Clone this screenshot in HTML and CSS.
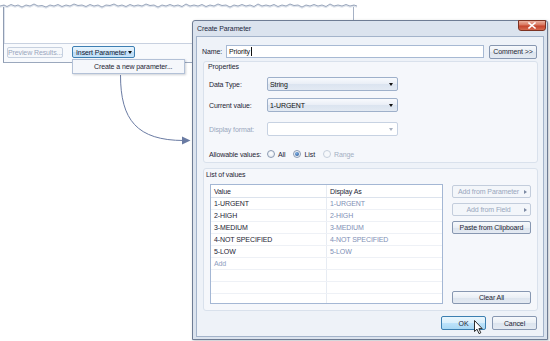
FILE: index.html
```html
<!DOCTYPE html>
<html>
<head>
<meta charset="utf-8">
<link rel="stylesheet" href="styles.css">
</head>
<body>
<div class="canvas">
  <div class="bgwin">
    <div class="bgwin-body"></div>
    <div class="bgwin-toolbar">
      <div class="tb-btn tb-disabled">Preview Results...</div>
      <div class="tb-btn tb-hot"><span>Insert Parameter</span><span class="caret"></span></div>
    </div>
  </div>
  <svg class="torn" viewBox="0 0 360 12" width="360" height="12">
    <path class="torn-shadow" d="M0 7 L4 6 L7 7.5 L11 5.5 L15 7 L18 6 L22 8 L26 6 L30 7 L34 5 L38 7 L42 6.5 L46 8 L50 6 L54 7 L58 5.5 L62 7.5 L66 6 L70 7 L74 5 L78 6.5 L82 6 L86 7.5 L90 5.5 L94 7 L98 6 L102 8 L106 6 L110 6.5 L114 5 L118 7 L122 6 L126 7.5 L130 5.5 L134 7 L138 6 L142 7 L146 5 L150 6.5 L154 6 L158 8 L162 6 L166 7 L170 5.5 L174 7 L178 6 L182 7.5 L186 5 L190 7 L194 6 L198 7 L202 5.5 L206 7.5 L210 6 L214 7 L218 5 L222 6.5 L226 6 L230 8 L234 6 L238 7 L242 5.5 L246 7 L250 6 L254 7.5 L258 5 L262 7 L266 6 L270 7 L274 5.5 L278 7.5 L282 6 L286 7 L290 5 L294 6.5 L298 6 L302 8 L306 6 L310 7 L314 5.5 L318 7 L322 6 L326 7.5 L330 5 L334 7 L338 6 L342 7 L346 5.5 L350 7 L354 6 L357 7"/>
    <path class="torn-line" d="M0 6 L4 5 L7 6.5 L11 4.5 L15 6 L18 5 L22 7 L26 5 L30 6 L34 4 L38 6 L42 5.5 L46 7 L50 5 L54 6 L58 4.5 L62 6.5 L66 5 L70 6 L74 4 L78 5.5 L82 5 L86 6.5 L90 4.5 L94 6 L98 5 L102 7 L106 5 L110 5.5 L114 4 L118 6 L122 5 L126 6.5 L130 4.5 L134 6 L138 5 L142 6 L146 4 L150 5.5 L154 5 L158 7 L162 5 L166 6 L170 4.5 L174 6 L178 5 L182 6.5 L186 4 L190 6 L194 5 L198 6 L202 4.5 L206 6.5 L210 5 L214 6 L218 4 L222 5.5 L226 5 L230 7 L234 5 L238 6 L242 4.5 L246 6 L250 5 L254 6.5 L258 4 L262 6 L266 5 L270 6 L274 4.5 L278 6.5 L282 5 L286 6 L290 4 L294 5.5 L298 5 L302 7 L306 5 L310 6 L314 4.5 L318 6 L322 5 L326 6.5 L330 4 L334 6 L338 5 L342 6 L346 4.5 L350 6 L354 5 L357 6"/>
  </svg>
  <div class="menu">Create a new parameter...</div>
  <svg class="flow-arrow" viewBox="0 0 200 160" width="200" height="160">
    <path d="M120.5 75 C120.5 120 137 140.5 184 140.5" fill="none" stroke="#6a7ba3" stroke-width="1"/>
    <polygon points="182,136.5 190.5,140.5 182,144.5" fill="#6a7ba3"/>
  </svg>

  <div class="dialog">
    <div class="titlebar">
      <div class="title">Create Parameter</div>
      <div class="close">
        <svg viewBox="0 0 8 7" width="8" height="7"><path d="M1 1 L7 6 M7 1 L1 6" stroke="#fff" stroke-width="1.6" stroke-linecap="square"/></svg>
      </div>
    </div>
    <div class="client">
      <div class="name-row">
        <div class="name-label">Name:</div>
        <div class="textbox">Priority<span class="caret-line"></span></div>
        <div class="btn btn-comment">Comment &gt;&gt;</div>
      </div>

      <div class="group group-props">
        <div class="group-title">Properties</div>
        <div class="prow prow-1">
          <div class="plabel">Data Type:</div>
          <div class="select"><span>String</span><span class="dn"></span></div>
        </div>
        <div class="prow prow-2">
          <div class="plabel">Current value:</div>
          <div class="select"><span>1-URGENT</span><span class="dn"></span></div>
        </div>
        <div class="prow prow-3">
          <div class="plabel plabel-off">Display format:</div>
          <div class="select select-off"><span></span><span class="dn"></span></div>
        </div>
        <div class="prow prow-4">
          <div class="plabel">Allowable values:</div>
          <div class="radios">
            <div class="radio"><span class="dot"></span>All</div>
            <div class="radio"><span class="dot dot-on"></span>List</div>
            <div class="radio radio-off"><span class="dot"></span>Range</div>
          </div>
        </div>
      </div>

      <div class="group group-list">
        <div class="group-title">List of values</div>
        <div class="list-body">
          <div class="grid">
            <div class="grow ghead"><span>Value</span><span>Display As</span></div>
            <div class="grow"><span>1-URGENT</span><span class="ro">1-URGENT</span></div>
            <div class="grow"><span>2-HIGH</span><span class="ro">2-HIGH</span></div>
            <div class="grow"><span>3-MEDIUM</span><span class="ro">3-MEDIUM</span></div>
            <div class="grow"><span>4-NOT SPECIFIED</span><span class="ro">4-NOT SPECIFIED</span></div>
            <div class="grow"><span>5-LOW</span><span class="ro">5-LOW</span></div>
            <div class="grow"><span class="add">Add</span><span></span></div>
            <div class="grow"><span></span><span></span></div>
            <div class="grow"><span></span><span></span></div>
            <div class="grow"><span></span><span></span></div>
          </div>
          <div class="side">
            <div class="btn btn-off btn-side"><span class="side-text">Add from Parameter</span><span class="rt"></span></div>
            <div class="btn btn-off btn-side"><span class="side-text">Add from Field</span><span class="rt"></span></div>
            <div class="btn">Paste from Clipboard</div>
            <div class="btn btn-clear">Clear All</div>
          </div>
        </div>
      </div>

      <div class="footer">
        <div class="btn btn-foot btn-hot">OK</div>
        <div class="btn btn-foot">Cancel</div>
      </div>
    </div>
  </div>

  <svg class="cursor" viewBox="0 0 10 15" width="10" height="15">
    <path d="M0.5 0.5 L0.5 11.5 L3 9.2 L5 13.6 L6.8 12.8 L4.9 8.6 L8.2 8.6 Z" fill="#fff" stroke="#1a1a1a" stroke-width="0.9" stroke-linejoin="round"/>
  </svg>
</div>
</body>
</html>
```

FILE: styles.css
```css
* { box-sizing: border-box; }
html, body { margin: 0; padding: 0; }
body {
  width: 550px;
  height: 341px;
  overflow: hidden;
  background: #ffffff;
  font-family: "Liberation Sans", Arial, sans-serif;
  font-size: 7px;
  line-height: 9px;
  letter-spacing: -0.1px;
  color: #1d2434;
}
.canvas { position: relative; width: 550px; height: 341px; }

/* background window */
.bgwin {
  position: absolute;
  left: 3px;
  top: 5px;
  width: 351px;
  height: 58px;
  display: flex;
  flex-direction: column;
  background: #fff;
  border-left: 1px solid #8f9cb2;
  border-right: 1px solid #a5b1c5;
  border-bottom: 1px solid #9ba8bd;
  box-shadow: inset 1px 0 0 #dde3ed;
}
.bgwin-body { height: 38px; }
.bgwin-toolbar {
  flex: 1;
  display: flex;
  align-items: flex-start;
  gap: 9px;
  padding: 2px 0 0 3px;
  border-top: 1px solid #c8d1e0;
  background: #f8fafd;
}
.tb-btn {
  height: 12px;
  display: flex;
  align-items: center;
  border-radius: 2px;
  white-space: nowrap;
}
.tb-disabled {
  width: 56px;
  height: 11px;
  margin-top: 1px;
  justify-content: center;
  border: 1px solid #c6d0df;
  background: #f6f8fb;
  color: #9aa6bd;
}
.tb-hot {
  width: 63px;
  padding: 0 2px 0 3px;
  justify-content: space-between;
  border: 1px solid #3d7fb3;
  background: linear-gradient(#e8f4fd, #d6ebfb 50%, #bcdcf6 51%, #c8e3f8);
  color: #142033;
}
.caret {
  width: 0;
  height: 0;
  border-left: 2.5px solid transparent;
  border-right: 2.5px solid transparent;
  border-top: 3px solid #111;
}
.torn { position: absolute; left: 0; top: 0; }
.torn-line { fill: none; stroke: #98a5bb; stroke-width: 1; }
.torn-shadow { fill: none; stroke: #dfe4ec; stroke-width: 1.4; }

.menu {
  position: absolute;
  left: 72px;
  top: 59px;
  width: 113px;
  height: 15px;
  padding-left: 21px;
  display: flex;
  align-items: center;
  background: #f5f7fb;
  border: 1px solid #b3c1d7;
  box-shadow: 1px 1px 2px rgba(60, 70, 90, 0.25);
  color: #1d2434;
  white-space: nowrap;
}
.flow-arrow { position: absolute; left: 0; top: 0; }

/* dialog */
.dialog {
  position: absolute;
  left: 192px;
  top: 20px;
  width: 356px;
  height: 320px;
  display: flex;
  flex-direction: column;
  padding: 0 3px 2px;
  background: #dbe3ee;
  border: 1px solid #6e7c94;
  border-radius: 3px 3px 0 0;
  box-shadow: 1px 1px 3px rgba(40, 50, 70, 0.3);
}
.titlebar {
  height: 15px;
  flex: none;
  display: flex;
  justify-content: space-between;
  align-items: flex-start;
}
.title { padding: 3px 0 0 1px; color: #1b2840; }
.close {
  width: 28px;
  height: 11px;
  margin: -1px -2px 0 0;
  display: flex;
  align-items: center;
  justify-content: center;
  border: 1px solid #7c3222;
  border-radius: 0 0 3px 3px;
  background: linear-gradient(#eab19f, #d9755d 45%, #c5432b 55%, #d56a4f);
}
.close svg { display: block; }

.client {
  flex: 1;
  display: flex;
  flex-direction: column;
  padding: 8px 6px 0 5px;
  background: #eef2f8;
  border: 1px solid #a3b3ca;
}
.name-row {
  height: 13px;
  display: flex;
  align-items: center;
}
.name-label { width: 24px; }
.textbox {
  width: 258px;
  height: 13px;
  margin-right: 5px;
  padding-left: 2px;
  display: flex;
  align-items: center;
  background: #fff;
  border: 1px solid #a7b9d3;
  color: #111;
}
.caret-line { width: 1px; height: 9px; background: #111; margin-left: 1px; }

.btn {
  height: 13px;
  display: flex;
  align-items: center;
  justify-content: center;
  white-space: nowrap;
  border: 1px solid #8797b1;
  border-radius: 2px;
  background: linear-gradient(#f7f9fc, #eaeff5 50%, #dce4ee 51%, #e4eaf2);
  color: #1d2434;
}
.btn-comment { width: 48px; height: 14px; }
.btn-off {
  border-color: #c3cddc;
  background: #f3f6fa;
  color: #99a6bd;
}
.btn-hot {
  border-color: #3c7fb1;
  background: linear-gradient(#eaf6fd, #d9effc 50%, #bde3fb 51%, #a9d8f4);
}

.group {
  border: 1px solid #d9e1ec;
  border-radius: 3px;
  background: #f5f7fb;
}
.group-title { color: #1d2434; }
.group-props {
  height: 102px;
  margin: 3px -1px 0 1px;
  padding-left: 3px;
}
.group-props .group-title { padding-left: 1px; }
.prow {
  height: 14px;
  display: flex;
  align-items: center;
  padding-left: 2px;
}
.prow-1 { margin-top: 6px; }
.prow-2 { margin-top: 7px; }
.prow-3 { margin-top: 10px; }
.prow-4 { margin-top: 11px; }
.plabel { width: 58px; white-space: nowrap; }
.plabel-off { color: #9aa7be; }
.select {
  width: 131px;
  height: 14px;
  display: flex;
  align-items: center;
  justify-content: space-between;
  padding: 0 4px 0 2px;
  border: 1px solid #9eb0ca;
  border-radius: 2px;
  background: linear-gradient(#f8fafd, #e9eef6 50%, #dbe4f0 51%, #e3eaf3);
  color: #111;
}
.dn {
  width: 0;
  height: 0;
  border-left: 2.5px solid transparent;
  border-right: 2.5px solid transparent;
  border-top: 3px solid #111;
}
.select-off {
  background: #fff;
  border-color: #c7d2e2;
}
.select-off .dn { border-top-color: #a9b2c2; }

.radios { display: flex; align-items: center; }
.radio {
  display: flex;
  align-items: center;
  gap: 3px;
  margin-right: 8px;
}
.dot {
  width: 8px;
  height: 8px;
  border-radius: 50%;
  border: 1px solid #8d9cb3;
  background: radial-gradient(circle at 50% 40%, #ffffff, #dde4ee);
  display: flex;
  align-items: center;
  justify-content: center;
}
.dot-on::after {
  content: "";
  width: 4px;
  height: 4px;
  border-radius: 50%;
  background: radial-gradient(circle at 40% 35%, #7fb0e6, #1f4f8e);
}
.radio-off { color: #a4afc3; }
.radio-off .dot { border-color: #c6cfdc; background: #f6f8fb; }

.group-list {
  height: 143px;
  margin: 5px -1px 0 1px;
  padding: 0 6px 0 2px;
}
.group-list .group-title { margin-top: 1px; line-height: 10px; }
.list-body {
  height: 120px;
  margin: 4px 0 0 4px;
  display: flex;
}
.grid {
  width: 233px;
  height: 120px;
  overflow: hidden;
  background: #fff;
  border: 1px solid #a4b7d4;
}
.grow {
  height: 12px;
  display: grid;
  grid-template-columns: 116px 1fr;
  border-bottom: 1px solid #eef1f6;
}
.grow span {
  padding-left: 3px;
  display: flex;
  align-items: center;
  white-space: nowrap;
  overflow: hidden;
}
.grow span:first-child { border-right: 1px solid #e7ecf3; }
.ghead { height: 13px; border-bottom-color: #dce3ed; }
.ghead span { color: #1d2434; }
.ro { color: #8090b6; }
.add { color: #8d9dc0; }

.side {
  width: 79px;
  margin-left: 9px;
  display: flex;
  flex-direction: column;
  gap: 5px;
  padding-top: 1px;
}
.btn-side { justify-content: space-between; padding: 0 3px 0 0; }
.side-text { flex: 1; text-align: center; }
.rt {
  width: 0;
  height: 0;
  border-top: 2.5px solid transparent;
  border-bottom: 2.5px solid transparent;
  border-left: 3px solid #7d8aa3;
}
.btn-clear { margin-top: auto; }

.footer {
  height: 14px;
  margin-top: 5px;
  display: flex;
  justify-content: flex-end;
  gap: 6px;
}
.btn-foot { width: 45px; height: 14px; }

.cursor { position: absolute; left: 474px; top: 320px; }
```
